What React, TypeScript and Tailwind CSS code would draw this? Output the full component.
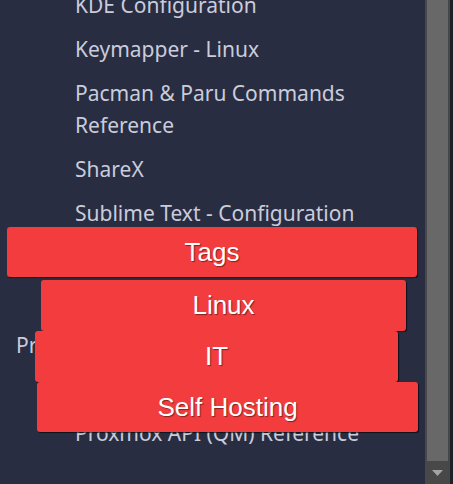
import React from 'react';

const notes: { label: string; indent?: boolean }[] = [
  { label: 'KDE Configuration' },
  { label: 'Keymapper - Linux' },
  { label: 'Pacman & Paru Commands Reference' },
  { label: 'ShareX' },
  { label: 'Sublime Text - Configuration' },
  { label: 'Windows Terminal' },
  { label: 'ZSH Configuration' },
  { label: 'Proxmox', indent: true },
  { label: 'Proxmox API (LXC) Reference' },
  { label: 'Proxmox API (QM) Reference' },
];

const tagBox =
  'flex items-center justify-center rounded-[3px] bg-[#f23c3d] text-white text-[26px] shadow-[1px_1px_1px_rgba(0,0,0,0.65)] [text-shadow:1px_1px_1px_rgba(0,0,0,0.45)]';

const App: React.FC = () => {
  return (
    <div className="flex w-[453px] h-[484px] overflow-hidden bg-[#292d42]">
      <div className="relative flex-1 overflow-hidden">
        <ul className="mt-[-11px] flex flex-col gap-[12px] pr-4 font-['Noto_Sans',sans-serif] text-[21px] leading-[32px] text-[#c9ccdb]">
          {notes.map((n) => (
            <li key={n.label} className={n.indent ? 'pl-[16px]' : 'pl-[75px]'}>
              {n.label}
            </li>
          ))}
        </ul>

        {/* tag dropdown */}
        <div className="absolute left-0 top-[227px] flex flex-col font-['Liberation_Sans',Arial,sans-serif]">
          <div className={`${tagBox} ml-[7px] w-[410px] h-[50px]`}>Tags</div>
          <div className={`${tagBox} mt-[3px] ml-[41px] w-[365px] h-[51px]`}>Linux</div>
          <div className={`${tagBox} ml-[35px] w-[363px] h-[51px]`}>IT</div>
          <div className={`${tagBox} ml-[37px] w-[381px] h-[50px]`}>Self Hosting</div>
        </div>
      </div>

      {/* scrollbar */}
      <div className="flex w-[28px] h-full">
        <div className="flex flex-col w-[25px] h-full bg-[#484848]">
          <div className="mx-[2px] h-[461px] bg-[#686868]" />
          <div className="flex flex-1 items-center justify-center">
            <svg width="11" height="6" viewBox="0 0 11 6">
              <path d="M0 0h11L5.5 6z" fill="#a3a3a3" />
            </svg>
          </div>
        </div>
        <div className="w-[3px] h-full bg-[#1f2129]" />
      </div>
    </div>
  );
};

export default App;
